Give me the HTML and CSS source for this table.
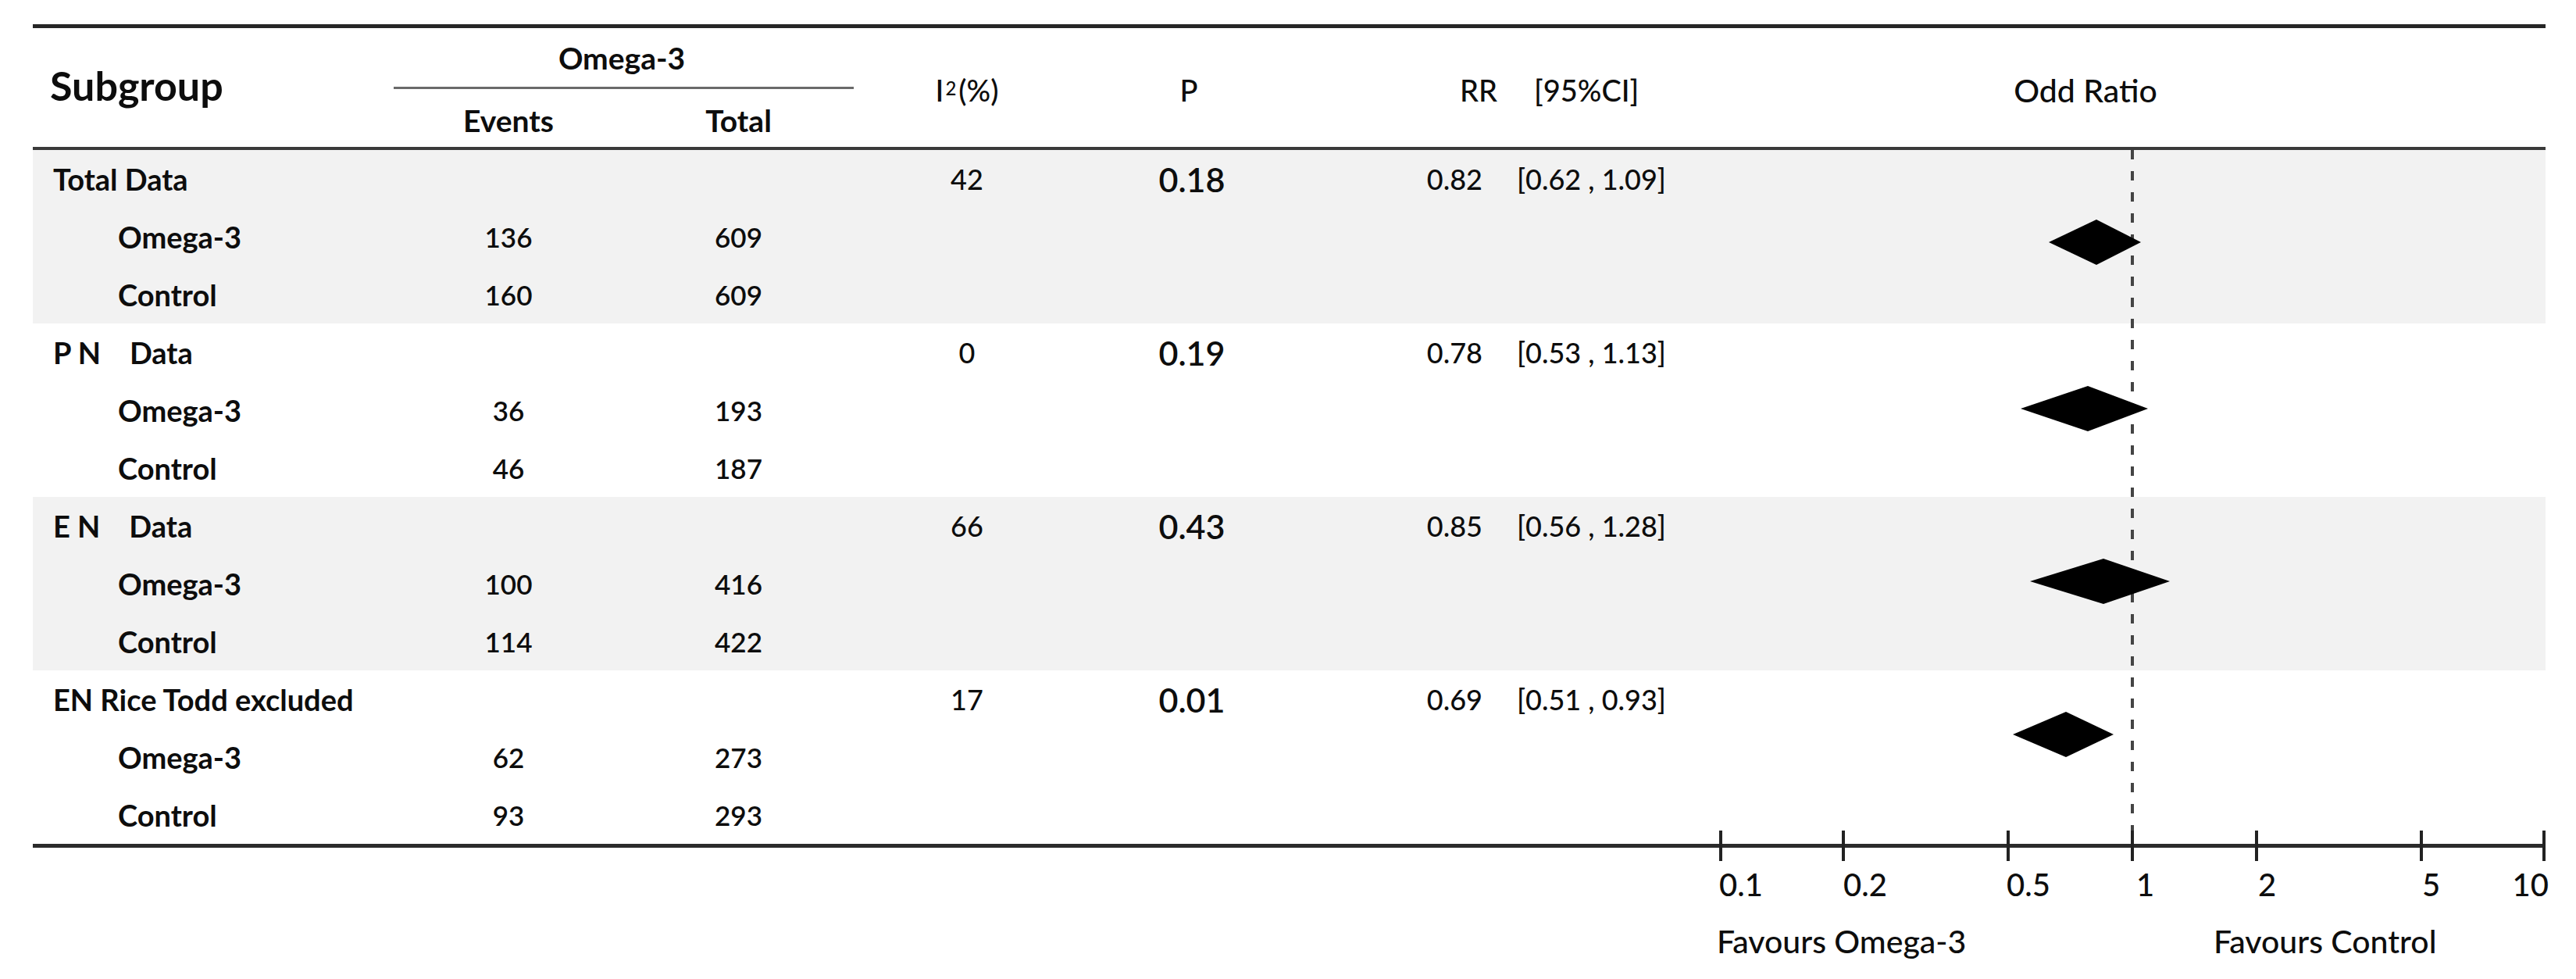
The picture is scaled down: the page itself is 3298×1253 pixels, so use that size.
FILE: index.html
```html
<!DOCTYPE html>
<html lang="en">
<head>
<meta charset="utf-8">
<title>Subgroup forest plot</title>
<link rel="stylesheet" href="styles.css">
</head>
<body>
<div class="figure">
  <div class="cols head">
    <div class="cell h-sub">Subgroup</div>
    <div class="cell h-group">Omega-3</div>
    <div class="cell h-ev">Events</div>
    <div class="cell h-tot">Total</div>
    <div class="cell h-i2">I<sup>2</sup>(%)</div>
    <div class="cell h-p">P</div>
    <div class="cell h-rr">RR</div>
    <div class="cell h-ci">[95%CI]</div>
    <div class="cell h-or">Odd Ratio</div>
  </div>

  <div class="body">
    <div class="group shade">
      <div class="cols row">
        <div class="cell lbl">Total Data</div><div class="cell"></div><div class="cell"></div>
        <div class="cell num-c v">42</div><div class="cell num-c pv">0.18</div>
        <div class="cell rr v">0.82</div><div class="cell ci v">[0.62 , 1.09]</div><div class="cell"></div>
      </div>
      <div class="cols row">
        <div class="cell lbl sub">Omega-3</div><div class="cell num-c n">136</div><div class="cell num-c n">609</div>
      </div>
      <div class="cols row">
        <div class="cell lbl sub">Control</div><div class="cell num-c n">160</div><div class="cell num-c n">609</div>
      </div>
    </div>

    <div class="group">
      <div class="cols row">
        <div class="cell lbl pre">P N    Data</div><div class="cell"></div><div class="cell"></div>
        <div class="cell num-c v">0</div><div class="cell num-c pv">0.19</div>
        <div class="cell rr v">0.78</div><div class="cell ci v">[0.53 , 1.13]</div><div class="cell"></div>
      </div>
      <div class="cols row">
        <div class="cell lbl sub">Omega-3</div><div class="cell num-c n">36</div><div class="cell num-c n">193</div>
      </div>
      <div class="cols row">
        <div class="cell lbl sub">Control</div><div class="cell num-c n">46</div><div class="cell num-c n">187</div>
      </div>
    </div>

    <div class="group shade">
      <div class="cols row">
        <div class="cell lbl pre">E N    Data</div><div class="cell"></div><div class="cell"></div>
        <div class="cell num-c v">66</div><div class="cell num-c pv">0.43</div>
        <div class="cell rr v">0.85</div><div class="cell ci v">[0.56 , 1.28]</div><div class="cell"></div>
      </div>
      <div class="cols row">
        <div class="cell lbl sub">Omega-3</div><div class="cell num-c n">100</div><div class="cell num-c n">416</div>
      </div>
      <div class="cols row">
        <div class="cell lbl sub">Control</div><div class="cell num-c n">114</div><div class="cell num-c n">422</div>
      </div>
    </div>

    <div class="group">
      <div class="cols row">
        <div class="cell lbl">EN Rice Todd excluded</div><div class="cell"></div><div class="cell"></div>
        <div class="cell num-c v">17</div><div class="cell num-c pv">0.01</div>
        <div class="cell rr v">0.69</div><div class="cell ci v">[0.51 , 0.93]</div><div class="cell"></div>
      </div>
      <div class="cols row">
        <div class="cell lbl sub">Omega-3</div><div class="cell num-c n">62</div><div class="cell num-c n">273</div>
      </div>
      <div class="cols row">
        <div class="cell lbl sub">Control</div><div class="cell num-c n">93</div><div class="cell num-c n">293</div>
      </div>
    </div>

    <svg class="plot" width="1058" height="888" viewBox="0 0 1058 888" aria-hidden="true">
      <line x1="529" y1="0" x2="529" y2="888" stroke="#444" stroke-width="4" stroke-dasharray="12 15"/>
      <polygon points="422,118 483,89 540,118 483,147" fill="#000"/>
      <polygon points="386,331 472,302 549,331 472,360" fill="#000"/>
      <polygon points="398,552 492,523 577,552 492,581" fill="#000"/>
      <polygon points="376,748 444,719 505,748 444,777" fill="#000"/>
    </svg>
  </div>

  <div class="cols axis-row">
    <div class="axis">
      <svg class="ticks" width="1058" height="40" viewBox="0 0 1058 40" aria-hidden="true">
        <g stroke="#222" stroke-width="4">
          <line x1="2" y1="0" x2="2" y2="39"/>
          <line x1="159" y1="0" x2="159" y2="39"/>
          <line x1="370" y1="0" x2="370" y2="39"/>
          <line x1="529" y1="0" x2="529" y2="39"/>
          <line x1="688" y1="0" x2="688" y2="39"/>
          <line x1="899" y1="0" x2="899" y2="39"/>
          <line x1="1056" y1="0" x2="1056" y2="39"/>
        </g>
      </svg>
      <span class="tl" style="left:0px">0.1</span>
      <span class="tl" style="left:159px">0.2</span>
      <span class="tl" style="left:368px">0.5</span>
      <span class="tl" style="left:534px">1</span>
      <span class="tl" style="left:690px">2</span>
      <span class="tl" style="left:900px">5</span>
      <span class="tl tl-end" style="left:1062px">10</span>
    </div>
  </div>

  <div class="cols fav-row">
    <div class="favours">
      <span>Favours Omega-3</span>
      <span>Favours Control</span>
    </div>
  </div>
</div>
</body>
</html>
```

FILE: styles.css
```css
* { box-sizing: border-box; }

body {
  margin: 0;
  background: #fff;
  color: #0d0d0d;
  font-family: Lato, "Open Sans", "Liberation Sans", sans-serif;
}

.figure {
  margin: 31px 0 0 42px;
  width: 3217px;
}

.cols {
  display: grid;
  grid-template-columns: 462px 294px 295px 290px 278px 264px 276px 1058px;
}

.cell {
  display: flex;
  align-items: center;
  white-space: nowrap;
}

/* header */
.head {
  border-top: 5px solid #262626;
  border-bottom: 4px solid #3a3a3a;
  grid-template-rows: 78px 74px;
  font-size: 38px;
}

.h-sub {
  grid-row: 1 / 3;
  grid-column: 1;
  padding-left: 22px;
  padding-bottom: 6px;
  font-size: 52px;
  font-weight: 700;
}

.h-group {
  grid-row: 1;
  grid-column: 2 / 4;
  justify-content: center;
  border-bottom: 3px solid #6a6a6a;
  font-size: 39px;
  font-weight: 700;
  padding-right: 5px;
}

.h-ev, .h-tot {
  grid-row: 2;
  justify-content: center;
  font-size: 39px;
  font-weight: 700;
  padding-top: 6px;
}
.h-ev { grid-column: 2; }
.h-tot { grid-column: 3; }

.h-i2, .h-p, .h-rr, .h-ci, .h-or {
  grid-row: 1 / 3;
  padding-top: 6px;
  font-weight: 500;
}
.h-i2 { grid-column: 4; justify-content: center; }
.h-p { grid-column: 5; justify-content: center; }
.h-rr { grid-column: 6; justify-content: flex-end; padding-right: 8px; }
.h-ci { grid-column: 7; padding-left: 39px; }
.h-or {
  grid-column: 8;
  justify-content: center;
  padding-right: 120px;
  font-size: 41px;
}

.h-i2 sup {
  font-size: 24px;
  position: relative;
  top: -3px;
  vertical-align: top;
  margin: 0 3px 0 2px;
}

/* body */
.body {
  position: relative;
  border-bottom: 5px solid #2b2b2b;
}

.shade { background: #f2f2f2; }

.row { height: 74px; }

.lbl {
  padding-left: 26px;
  font-size: 38px;
  font-weight: 700;
}
.lbl.sub { padding-left: 109px; }
.lbl.pre { white-space: pre; }

.num-c { justify-content: center; }

.n { font-size: 35px; font-weight: 600; }
.v { font-size: 36px; font-weight: 500; }
.pv { font-size: 43px; font-weight: 600; padding-left: 8px; }

.rr { justify-content: flex-end; padding-right: 27px; }
.ci { padding-left: 17px; }

.plot {
  position: absolute;
  top: 0;
  left: 2159px;
  overflow: visible;
}

/* axis */
.axis-row { height: 90px; }

.axis {
  grid-column: 8;
  position: relative;
}

.ticks {
  position: absolute;
  top: -22px;
  left: 0;
  overflow: visible;
}

.tl {
  position: absolute;
  top: 23px;
  font-size: 40px;
  line-height: 48px;
  font-weight: 500;
}
.tl-end { transform: translateX(-100%); }

.fav-row { margin-top: 6px; }

.favours {
  grid-column: 8;
  display: grid;
  grid-template-columns: 636px 1fr;
  margin-left: -3px;
  font-size: 41px;
  line-height: 48px;
  font-weight: 500;
}
```
